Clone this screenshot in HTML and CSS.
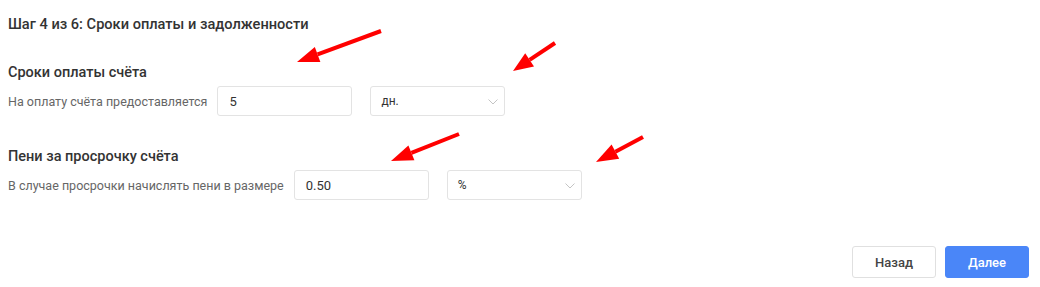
FILE: index.html
```html
<!DOCTYPE html>
<html lang="ru">
<head>
<meta charset="utf-8">
<title>Шаг 4 из 6</title>
<link rel="stylesheet" href="styles.css">
</head>
<body>
<div class="page">
  <h1 class="step-title">Шаг 4 из 6: Сроки оплаты и задолженности</h1>

  <section class="section first">
    <h2 class="section-title">Сроки оплаты счёта</h2>
    <div class="row">
      <span class="label">На оплату счёта предоставляется</span>
      <div class="field">5</div>
      <div class="select">дн.<svg class="chev" viewBox="0 0 10 6" width="10" height="6"><path d="M0.5 0.5 L5 5 L9.5 0.5" fill="none" stroke="#c4c4c4" stroke-width="1"/></svg></div>
    </div>
  </section>

  <section class="section second">
    <h2 class="section-title">Пени за просрочку счёта</h2>
    <div class="row">
      <span class="label">В случае просрочки начислять пени в размере</span>
      <div class="field">0.50</div>
      <div class="select">%<svg class="chev" viewBox="0 0 10 6" width="10" height="6"><path d="M0.5 0.5 L5 5 L9.5 0.5" fill="none" stroke="#c4c4c4" stroke-width="1"/></svg></div>
    </div>
  </section>

  <div class="actions">
    <button class="btn btn-back">Назад</button>
    <button class="btn btn-next">Далее</button>
  </div>

  <svg class="arrows" width="1040" height="287" viewBox="0 0 1040 287">
    <g fill="#ff0000" stroke="none">
      <line x1="381" y1="31" x2="317.6" y2="54.4" stroke="#ff0000" stroke-width="4"/>
      <polygon points="297,62 320.4,61.9 314.8,46.9"/>
      <line x1="555" y1="43" x2="529.6" y2="59.9" stroke="#ff0000" stroke-width="4"/>
      <polygon points="513,71 534,66.6 525.2,53.2"/>
      <line x1="459" y1="134" x2="411.4" y2="152.9" stroke="#ff0000" stroke-width="4"/>
      <polygon points="391,161 414.4,160.3 408.4,145.5"/>
      <line x1="643" y1="137" x2="615.4" y2="151.7" stroke="#ff0000" stroke-width="4"/>
      <polygon points="596,162 619.2,158.8 611.6,144.6"/>
    </g>
  </svg>
</div>
</body>
</html>
```

FILE: styles.css
```css
* { box-sizing: border-box; }
html, body {
  margin: 0;
  padding: 0;
  background: #fff;
}
body {
  font-family: Roboto, "Noto Sans", "Liberation Sans", sans-serif;
  color: #333;
}
.page {
  position: relative;
  width: 1040px;
  height: 287px;
  padding: 14px 11px 0 8px;
  display: flex;
  flex-direction: column;
}
.step-title {
  margin: 0;
  font-size: 14.6px;
  line-height: 20px;
  font-weight: 500;
  color: #333;
}
.section-title {
  margin: 0;
  font-size: 14.5px;
  line-height: 20px;
  font-weight: 500;
  color: #333;
}
.section.first { margin-top: 29px; }
.section.second { margin-top: 31px; }
.row {
  margin-top: 3px;
  display: flex;
  align-items: center;
  height: 30px;
}
.label {
  font-size: 12.5px;
  color: #666;
  margin-right: 10px;
}
.field, .select {
  width: 135px;
  height: 30px;
  border: 1px solid #e3e3e3;
  border-radius: 3px;
  color: #333;
  display: flex;
  align-items: center;
}
.field {
  padding-left: 11px;
  font-size: 13px;
}
.select {
  margin-left: 18px;
  padding-left: 10px;
  padding-right: 6px;
  justify-content: space-between;
  font-size: 12px;
}
.chev { display: block; margin-top: 1px; }
.actions {
  margin-top: 46px;
  display: flex;
  justify-content: flex-end;
  gap: 9px;
}
.btn {
  width: 84px;
  height: 32px;
  border-radius: 3px;
  font-family: Roboto, "Noto Sans", "Liberation Sans", sans-serif;
  font-size: 13px;
  font-weight: 500;
  cursor: pointer;
}
.btn-back {
  background: #fff;
  border: 1px solid #e0e0e0;
  color: #444;
}
.btn-next {
  background: #4a86f8;
  border: 1px solid #4a86f8;
  color: #fff;
}
.arrows {
  position: absolute;
  left: 0;
  top: 0;
  pointer-events: none;
}
```
